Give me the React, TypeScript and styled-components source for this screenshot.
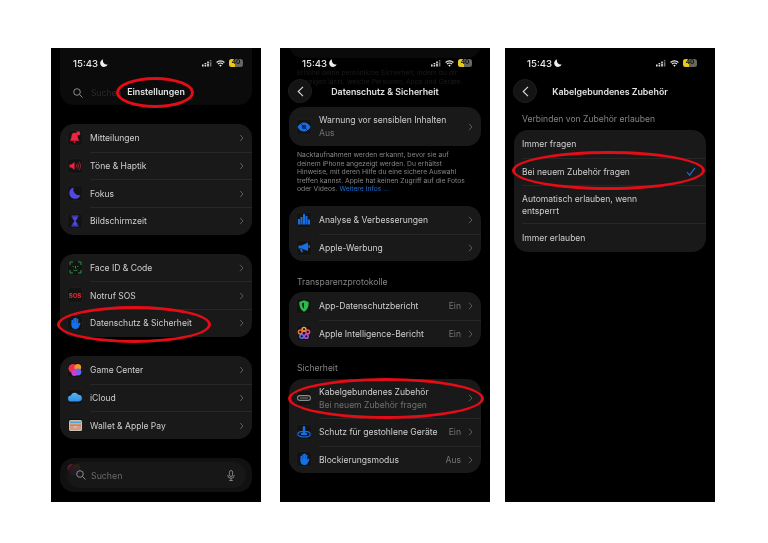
import React from "react";
import styled, { createGlobalStyle } from "styled-components";

const Global = createGlobalStyle`
  html, body { margin: 0; padding: 0; background: #fff; }
  body { font-family: Inter, "Liberation Sans", sans-serif; }
`;

const Page = styled.main`
  width: 768px;
  height: 543px;
  box-sizing: border-box;
  padding: 48px 0 0 51px;
  display: flex;
  align-items: flex-start;
  overflow: hidden;
`;

const Phone = styled.section<{ $ml?: number }>`
  position: relative;
  width: 210px;
  height: 454px;
  margin-left: ${(p) => p.$ml ?? 0}px;
  background: #000;
  overflow: hidden;
  box-sizing: border-box;
  padding: 0 9px;
  color: #d6d6d6;
  display: flex;
  flex-direction: column;
  filter: blur(0.3px);
`;

const Status = styled.div`
  height: 14px;
  margin-top: 8px;
  padding: 0 9px 0 13px;
  display: flex;
  align-items: center;
  position: relative;
  z-index: 2;
`;
const Time = styled.span`
  font-size: 9.6px;
  font-weight: 500;
  color: #e8e8e8;
  margin-right: 2px;
`;
const StatusRight = styled.div`
  margin-left: auto;
  display: flex;
  align-items: center;
  gap: 4px;
`;
const Battery = styled.span`
  width: 14px;
  height: 7.5px;
  border-radius: 2.5px;
  background: linear-gradient(90deg, #e8c81c 0 46%, #66665e 46% 100%);
  color: #111;
  font-size: 6.4px;
  font-weight: 700;
  line-height: 7.5px;
  text-align: center;
  display: block;
`;

const Header = styled.header`
  height: 26px;
  margin-top: 8px;
  position: relative;
  display: flex;
  align-items: center;
  justify-content: center;
  font-size: 8.8px;
  font-weight: 600;
  color: #e2e2e2;
  z-index: 2;
`;
const Back = styled.span`
  position: absolute;
  left: -1px;
  top: 1px;
  width: 24px;
  height: 24px;
  border-radius: 50%;
  background: #141414;
  border: 1px solid #1d1d1d;
  box-sizing: border-box;
  display: flex;
  align-items: center;
  justify-content: center;
`;

const GhostTop = styled.div`
  position: absolute;
  left: 9px;
  right: 9px;
  top: -30px;
  height: 87px;
  border-radius: 14px;
  background: #0b0b0b;
  display: flex;
  align-items: flex-end;
  padding: 0 0 7px 13px;
  box-sizing: border-box;
  gap: 8px;
  font-size: 8.6px;
  color: #2a2a2a;
`;
const GhostCard = styled.div`
  position: absolute;
  left: 9px;
  right: 9px;
  top: -24px;
  height: 34px;
  border-radius: 14px;
  background: #0a0a0a;
`;
const GhostNote = styled.p`
  position: absolute;
  left: 17px;
  right: 20px;
  top: 21px;
  margin: 0;
  font-size: 6.8px;
  line-height: 8.6px;
  color: #1b1b1b;
`;

const Group = styled.div<{ $mt?: number }>`
  position: relative;
  z-index: 1;
  background: #191919;
  border-radius: 14px;
  margin-top: ${(p) => p.$mt ?? 0}px;
  overflow: hidden;
`;
const Row = styled.div<{ $h?: number; $pl?: number }>`
  height: ${(p) => p.$h ?? 27.7}px;
  display: flex;
  align-items: stretch;
  padding-left: ${(p) => p.$pl ?? 7}px;
`;
const Tile = styled.span`
  flex: none;
  align-self: center;
  width: 16px;
  height: 16px;
  border-radius: 4.5px;
  margin-right: 7px;
  background: #131313;
  box-shadow: inset 0 0 0 0.5px #262626;
  display: flex;
  align-items: center;
  justify-content: center;
`;
const RowBody = styled.div<{ $first?: boolean }>`
  flex: 1;
  min-width: 0;
  display: flex;
  align-items: center;
  padding-right: 8px;
  border-top: ${(p) => (p.$first ? "none" : "0.5px solid #272727")};
`;
const Labels = styled.div`
  flex: 1;
  min-width: 0;
`;
const Label = styled.div`
  font-size: 8.55px;
  line-height: 12px;
  color: #cfcfcf;
`;
const Sub = styled.div`
  font-size: 8.55px;
  line-height: 12px;
  margin-top: 1px;
  color: #717171;
`;
const Value = styled.span`
  font-size: 8.55px;
  color: #747474;
  margin-right: 7px;
`;

const Note = styled.p`
  margin: 5px 0 0;
  padding: 0 8px;
  font-size: 6.75px;
  line-height: 8.6px;
  color: #858585;
  max-width: 172px;
  a { color: #1c6fd0; }
`;
const SectionTitle = styled.h3<{ $mt: number }>`
  margin: ${(p) => p.$mt}px 0 0;
  padding: 0 8px;
  height: 16px;
  line-height: 16px;
  font-size: 8.55px;
  font-weight: 400;
  color: #858585;
`;

const GhostBottom = styled.div`
  position: absolute;
  left: 9px;
  right: 9px;
  top: 410px;
  height: 34px;
  border-radius: 14px;
  background: #111;
`;
const GhostIcon = styled.span`
  position: absolute;
  left: 7px;
  top: 5px;
  opacity: 0.4;
  display: flex;
`;
const Search = styled.div`
  position: absolute;
  left: 16px;
  width: 179px;
  top: 414px;
  height: 26px;
  border-radius: 13px;
  background: rgba(24, 24, 24, 0.82);
  display: flex;
  align-items: center;
  padding: 0 11px 0 9px;
  box-sizing: border-box;
  font-size: 8.8px;
  color: #6a6a6a;
  gap: 5px;
  z-index: 1;
`;
const SearchText = styled.span`
  flex: 1;
`;

const Ring = styled.div<{ $x: number; $y: number; $w: number; $h: number }>`
  position: absolute;
  left: ${(p) => p.$x}px;
  top: ${(p) => p.$y}px;
  width: ${(p) => p.$w}px;
  height: ${(p) => p.$h}px;
  border: 3px solid #e30d17;
  border-radius: 50%;
  box-sizing: border-box;
  z-index: 3;
`;

const Chevron = () => (
  <svg width="5" height="8" viewBox="0 0 5 8" fill="none">
    <path d="M1 .8 4 4 1 7.2" stroke="#5c5c5c" strokeWidth="1" />
  </svg>
);
const Moon = ({ s = 8, c = "#eee" }: { s?: number; c?: string }) => (
  <svg width={s} height={s} viewBox="0 0 10 10">
    <path d="M4 .4a4.8 4.8 0 1 0 5.6 6.2A4.6 4.6 0 0 1 4 .4Z" fill={c} />
  </svg>
);

const Bar = () => (
  <Status>
    <Time>15:43</Time>
    <Moon />
    <StatusRight>
      <svg width="10" height="7" viewBox="0 0 10 7" fill="#e4e4e4">
        <rect x="0" y="4.5" width="1.6" height="2" />
        <rect x="2.6" y="3" width="1.6" height="1.4" />
        <rect x="2.6" y="5" width="1.6" height="1.5" />
        <rect x="5.2" y="1.5" width="1.6" height="1.5" />
        <rect x="5.2" y="3.5" width="1.6" height="3" />
        <rect x="7.8" y="0" width="1.6" height="1.5" fill="#777" />
        <rect x="7.8" y="2.2" width="1.6" height="4.3" fill="#777" />
      </svg>
      <svg width="9" height="7" viewBox="0 0 9 7" fill="none" stroke="#eee" strokeWidth="1.1">
        <path d="M.6 2.5a5.5 5.5 0 0 1 7.8 0M2 4a3.5 3.5 0 0 1 5 0" />
        <path d="M4.5 6.8 3.3 5.4a1.7 1.7 0 0 1 2.4 0Z" fill="#eee" stroke="none" />
      </svg>
      <Battery>40</Battery>
    </StatusRight>
  </Status>
);

const BackBtn = () => (
  <Back>
    <svg width="7" height="11" viewBox="0 0 7 11" fill="none">
      <path d="M6 .8 1.2 5.5 6 10.2" stroke="#ddd" strokeWidth="1.1" />
    </svg>
  </Back>
);

const Bell = () => (
  <svg width="12" height="13" viewBox="0 0 11 12" fill="#ef2440">
    <path d="M5 1.5C3 1.5 2.3 3.4 2.2 5.2 2 7 1.6 7.8.6 8.9h9C8.7 7.8 8.2 7 8 5.2 7.9 3.4 7 1.5 5 1.5Z" />
    <path d="M3.6 9.6h2.8L5 11.3Z" />
    <circle cx="8.5" cy="2.2" r="1.9" />
  </svg>
);
const Speaker = () => (
  <svg width="13" height="10" viewBox="0 0 12 10" fill="none">
    <path d="M0 3.5h2L5 1v8L2 6.500H0Z" fill="#f5203e" />
    <path d="M6.5 3.500a2 2 0 0 1 0 3M8 2.300a4 4 0 0 1 0 5.400M9.500 1a6 6 0 0 1 0 8" stroke="#b42a3c" strokeWidth=".8" />
  </svg>
);
const Hourglass = () => (
  <svg width="8" height="12" viewBox="0 0 8 12">
    <path d="M.5.500h7v1.200H.5zM.5 10.300h7v1.200h-7z" fill="#4a46e0" />
    <path d="M1.300 2h5.400C6.700 4 5 5 4.600 6c.4 1 2.100 2 2.100 4H1.300c0-2 1.700-3 2.100-4C3 5 1.300 4 1.300 2Z" fill="#4a46e0" />
  </svg>
);
const FaceId = () => (
  <svg width="13" height="13" viewBox="0 0 13 13" fill="none" stroke="#2f9e4d" strokeWidth=".9">
    <path d="M1 4V1h3M9 1h3v3M12 9v3H9M4 12H1V9M4.200 5v1M8.800 5v1M6.500 5v2.300H6M4.500 9c1.300.8 2.700.8 4 0" />
  </svg>
);
const SosText = styled.span`
  font-size: 6.2px;
  font-weight: 800;
  letter-spacing: -.2px;
  color: #e0262a;
`;
const Hand = ({ s = 12 }: { s?: number }) => (
  <svg width={s} height={s} viewBox="0 0 12 13" fill="#1670e8">
    <rect x="2.200" y="3" width="1.800" height="6" rx=".9" />
    <rect x="4.100" y="1" width="1.800" height="7" rx=".9" />
    <rect x="6" y=".5" width="1.800" height="7" rx=".9" />
    <rect x="7.900" y="1.800" width="1.700" height="6" rx=".85" />
    <path d="M2.200 6.500h7.400v1.300l1-1.300c.7-.8 1.700 0 1.200.8L10 11c-.7 1.200-1.800 2-3.500 2-2.700 0-4.300-1.500-4.300-4Z" />
  </svg>
);
const GameCenter = () => (
  <svg width="14" height="14" viewBox="0 0 14 14">
    <circle cx="5" cy="5.500" r="4.500" fill="#f0304f" />
    <circle cx="9.800" cy="4.200" r="3.300" fill="#f59a1e" />
    <circle cx="10" cy="9" r="3.400" fill="#5b6cf0" />
    <circle cx="6.500" cy="10" r="3" fill="#c43fd8" />
  </svg>
);
const Cloud = () => (
  <svg width="14" height="10" viewBox="0 0 14 10">
    <defs>
      <linearGradient id="cl" x1="0" y1="0" x2="0" y2="1">
        <stop offset="0" stopColor="#55b8f5" />
        <stop offset="1" stopColor="#2f8ee6" />
      </linearGradient>
    </defs>
    <path d="M3.200 9.500a3 3 0 0 1-.3-6 3.900 3.900 0 0 1 7.200-.8 3.400 3.400 0 0 1 .7 6.800Z" fill="url(#cl)" />
  </svg>
);
const Wallet = () => (
  <svg width="13" height="11" viewBox="0 0 13 11">
    <rect width="13" height="11" rx="1.500" fill="#c9c2b4" />
    <rect x="1" y="1.500" width="11" height="1.700" fill="#4aa3df" />
    <rect x="1" y="3.200" width="11" height="1.300" fill="#e6b33c" />
    <rect x="1" y="4.500" width="11" height="1.300" fill="#e2684f" />
    <path d="M1 6h3.500a2 2 0 0 0 4 0H12v4H1Z" fill="#d99a85" />
  </svg>
);
const Eye = () => (
  <svg width="14" height="10" viewBox="0 0 14 10">
    <path d="M.5 5C2 2 4.500.5 7 .5S12 2 13.500 5C12 8 9.500 9.500 7 9.500S2 8 .5 5Z" fill="#1670e8" />
    <circle cx="7" cy="5" r="2.300" fill="#0c2a55" />
    <path d="M3 1 11 9" stroke="#191919" strokeWidth=".9" />
  </svg>
);
const Chart = () => (
  <svg width="12" height="11" viewBox="0 0 12 11" fill="#1670e8">
    <rect x="0" y="5" width="2" height="5.500" />
    <rect x="2.500" y="3" width="2" height="7.500" />
    <rect x="5" y="0" width="2" height="10.500" />
    <rect x="7.500" y="2" width="2" height="8.500" />
    <rect x="10" y="5.500" width="2" height="5" />
  </svg>
);
const Megaphone = () => (
  <svg width="12" height="11" viewBox="0 0 12 11" fill="#1670e8">
    <path d="M.5 3.500h3L10 .5v8.500L3.500 6.500h-3Z" />
    <path d="M2 7h2l.8 3.300H3.200Z" />
    <rect x="10.500" y="3" width="1.300" height="3" rx=".6" />
  </svg>
);
const Shield = () => (
  <svg width="10" height="12" viewBox="0 0 10 12">
    <path d="M5 .3 9.700 2c0 4.500-1 7.800-4.700 9.700C1.300 9.800.3 6.500.3 2Z" fill="#2db84d" />
    <path d="M5 2.500c-1 .5-1.800.8-2 .8 0 2.500.6 4.400 2 5.500Z" fill="#0c2a12" />
  </svg>
);
const Flower = () => (
  <svg width="14" height="14" viewBox="0 0 14 14" fill="none" strokeWidth="1.500">
    <circle cx="7" cy="3.300" r="1.900" stroke="#f0a13a" />
    <circle cx="10.700" cy="6" r="1.900" stroke="#e9507a" />
    <circle cx="9.300" cy="10.400" r="1.900" stroke="#b24fe0" />
    <circle cx="4.700" cy="10.400" r="1.900" stroke="#5a70f0" />
    <circle cx="3.300" cy="6" r="1.900" stroke="#e8703a" />
  </svg>
);
const Cable = () => (
  <svg width="14" height="6" viewBox="0 0 14 6" fill="none">
    <rect x=".6" y=".6" width="12.800" height="4.800" rx="2.400" stroke="#8d8d8d" strokeWidth="1.100" />
    <path d="M3 3h8" stroke="#8d8d8d" strokeWidth=".9" />
  </svg>
);
const Stolen = () => (
  <svg width="14" height="13" viewBox="0 0 14 13" fill="none">
    <ellipse cx="7" cy="9.200" rx="6.300" ry="2.800" stroke="#1670e8" strokeWidth="1.100" />
    <ellipse cx="7" cy="9" rx="3.300" ry="1.300" fill="#1670e8" />
    <path d="M5.800 9V2.200a1.200 1.200 0 0 1 2.400 0V9Z" fill="#1670e8" />
  </svg>
);
const Check = () => (
  <svg width="10" height="9" viewBox="0 0 10 9" fill="none">
    <path d="M1 5 3.500 8 9 .8" stroke="#1a74e0" strokeWidth="1.100" />
  </svg>
);
const CheckSlot = styled.span`
  margin-right: 2px;
  display: flex;
`;
const Magnifier = () => (
  <svg width="10" height="10" viewBox="0 0 10 10" fill="none" stroke="#9a9a9a" strokeWidth=".9">
    <circle cx="4" cy="4" r="3.300" />
    <path d="m6.500 6.500 3 3" />
  </svg>
);
const Mic = () => (
  <svg width="8" height="11" viewBox="0 0 8 11" fill="none" stroke="#9a9a9a" strokeWidth=".8">
    <rect x="2.400" y=".5" width="3.200" height="6" rx="1.600" />
    <path d="M.7 5a3.300 3.300 0 0 0 6.600 0M4 8.300v2.200M2.200 10.500h3.600" />
  </svg>
);

type Item = { icon?: React.ReactNode; label: string; sub?: string; value?: string; h?: number };

const List = ({ items, mt }: { items: Item[]; mt?: number }) => (
  <Group $mt={mt}>
    {items.map((it, i) => (
      <Row key={it.label} $h={it.h}>
        <Tile>{it.icon}</Tile>
        <RowBody $first={i === 0}>
          <Labels>
            <Label>{it.label}</Label>
            {it.sub && <Sub>{it.sub}</Sub>}
          </Labels>
          {it.value && <Value>{it.value}</Value>}
          <Chevron />
        </RowBody>
      </Row>
    ))}
  </Group>
);

const OptionText = styled(Label)`
  max-width: 130px;
`;

const options: { label: string; h: number; check?: boolean }[] = [
  { label: "Immer fragen", h: 27.5 },
  { label: "Bei neuem Zubehör fragen", h: 27.5, check: true },
  { label: "Automatisch erlauben, wenn entsperrt", h: 38 },
  { label: "Immer erlauben", h: 29 },
];

export default function App() {
  return (
    <Page>
      <Global />
      <Phone>
        <GhostTop>
          <Magnifier />
          Suchen
        </GhostTop>
        <Bar />
        <Header>Einstellungen</Header>
        <List
          mt={20}
          items={[
            { icon: <Bell />, label: "Mitteilungen" },
            { icon: <Speaker />, label: "Töne & Haptik" },
            { icon: <Moon s={12} c="#5148e6" />, label: "Fokus" },
            { icon: <Hourglass />, label: "Bildschirmzeit" },
          ]}
        />
        <List
          mt={19}
          items={[
            { icon: <FaceId />, label: "Face ID & Code" },
            { icon: <SosText>SOS</SosText>, label: "Notruf SOS" },
            { icon: <Hand />, label: "Datenschutz & Sicherheit" },
          ]}
        />
        <List
          mt={19}
          items={[
            { icon: <GameCenter />, label: "Game Center" },
            { icon: <Cloud />, label: "iCloud" },
            { icon: <Wallet />, label: "Wallet & Apple Pay" },
          ]}
        />
        <GhostBottom>
          <GhostIcon>
            <GameCenter />
          </GhostIcon>
        </GhostBottom>
        <Search>
          <Magnifier />
          <SearchText>Suchen</SearchText>
          <Mic />
        </Search>
        <Ring $x={65} $y={29} $w={78} $h={31} />
        <Ring $x={6} $y={258} $w={154} $h={37} />
      </Phone>

      <Phone $ml={19}>
        <GhostCard />
        <GhostNote>
          Erhöhe deine persönliche Sicherheit, indem du dir anzeigen lässt, welche Personen, Apps und
          Geräte.
        </GhostNote>
        <Bar />
        <Header>
          <BackBtn />
          Datenschutz &amp; Sicherheit
        </Header>
        <List
          mt={3}
          items={[{ icon: <Eye />, label: "Warnung vor sensiblen Inhalten", sub: "Aus", h: 39 }]}
        />
        <Note>
          Nacktaufnahmen werden erkannt, bevor sie auf deinem iPhone angezeigt werden. Du erhältst
          Hinweise, mit deren Hilfe du eine sichere Auswahl treffen kannst. Apple hat keinen Zugriff
          auf die Fotos oder Videos. <a>Weitere Infos …</a>
        </Note>
        <List
          mt={12}
          items={[
            { icon: <Chart />, label: "Analyse & Verbesserungen" },
            { icon: <Megaphone />, label: "Apple-Werbung" },
          ]}
        />
        <SectionTitle $mt={12.6}>Transparenzprotokolle</SectionTitle>
        <List
          mt={2}
          items={[
            { icon: <Shield />, label: "App-Datenschutzbericht", value: "Ein" },
            { icon: <Flower />, label: "Apple Intelligence-Bericht", value: "Ein" },
          ]}
        />
        <SectionTitle $mt={12.6}>Sicherheit</SectionTitle>
        <List
          mt={3}
          items={[
            { icon: <Cable />, label: "Kabelgebundenes Zubehör", sub: "Bei neuem Zubehör fragen", h: 39 },
            { icon: <Stolen />, label: "Schutz für gestohlene Geräte", value: "Ein" },
            { icon: <Hand />, label: "Blockierungsmodus", value: "Aus" },
          ]}
        />
        <Ring $x={8} $y={330} $w={196} $h={41} />
      </Phone>

      <Phone $ml={15}>
        <Bar />
        <Header>
          <BackBtn />
          Kabelgebundenes Zubehör
        </Header>
        <SectionTitle $mt={7}>Verbinden von Zubehör erlauben</SectionTitle>
        <Group $mt={3}>
          {options.map((o, i) => (
            <Row key={o.label} $h={o.h} $pl={8}>
              <RowBody $first={i === 0}>
                <Labels>
                  <OptionText>{o.label}</OptionText>
                </Labels>
                {o.check && (
                  <CheckSlot>
                    <Check />
                  </CheckSlot>
                )}
              </RowBody>
            </Row>
          ))}
        </Group>
        <Ring $x={7} $y={103} $w={193} $h={39} />
      </Phone>
    </Page>
  );
}
